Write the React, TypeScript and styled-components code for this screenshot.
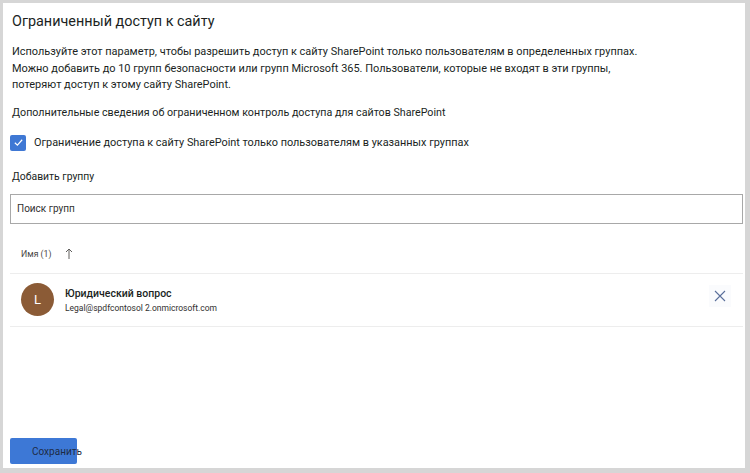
import React from 'react';
import styled, { createGlobalStyle } from 'styled-components';

const GlobalStyle = createGlobalStyle`
  html, body {
    margin: 0;
    padding: 0;
    background: #d6d6d6;
  }
  body {
    font-family: Roboto, "Noto Sans", Arial, sans-serif;
    color: #323130;
  }
`;

const Frame = styled.div`
  width: 750px;
  height: 473px;
  box-sizing: border-box;
  padding: 3px 5px 5px 3px;
  background: #d6d6d6;
`;

const Panel = styled.div`
  height: 100%;
  box-sizing: border-box;
  background: #ffffff;
  padding: 8px 2px 4px 7px;
  display: flex;
  flex-direction: column;
`;

const Title = styled.h1`
  margin: 0 0 0 2px;
  font-size: 14.4px;
  font-weight: 400;
  line-height: 22px;
  color: #201f1e;
`;

const Paragraph = styled.p`
  margin: 11px 0 0 2px;
  font-size: 10.95px;
  line-height: 16.5px;
  color: #201f1e;
`;

const Note = styled.p`
  margin: 11px 0 0 2px;
  font-size: 10.7px;
  line-height: 16px;
  color: #201f1e;
`;

const CheckRow = styled.label`
  display: flex;
  align-items: center;
  gap: 8px;
  margin-top: 14px;
  font-size: 10.9px;
  color: #201f1e;
`;

const CheckBox = styled.span`
  width: 16px;
  height: 16px;
  border-radius: 2px;
  background: #3f78d4;
  display: flex;
  align-items: center;
  justify-content: center;
  flex-shrink: 0;
`;

const FieldLabel = styled.div`
  margin: 18px 0 0 2px;
  font-size: 10.4px;
  line-height: 16px;
  color: #201f1e;
`;

const SearchBox = styled.div`
  margin-top: 9px;
  height: 30px;
  box-sizing: border-box;
  border: 1px solid #a8a8a8;
  display: flex;
  align-items: center;
  padding-left: 6px;
  font-size: 10px;
  color: #323130;
`;

const ListHeader = styled.div`
  display: flex;
  align-items: center;
  gap: 14px;
  height: 50px;
  box-sizing: border-box;
  padding: 12px 0 0 11px;
  font-size: 8.7px;
  color: #484644;
  border-bottom: 1px solid #ededed;
`;

const Row = styled.div`
  display: flex;
  align-items: center;
  height: 52px;
  padding-left: 11px;
  padding-right: 12px;
  border-bottom: 1px solid #ededed;
`;

const Avatar = styled.div<{ $color: string }>`
  width: 33px;
  height: 33px;
  border-radius: 50%;
  background: ${({ $color }) => $color};
  color: #ffffff;
  display: flex;
  align-items: center;
  justify-content: center;
  font-size: 13px;
  flex-shrink: 0;
`;

const Info = styled.div`
  margin-left: 11px;
  display: flex;
  flex-direction: column;
  gap: 3px;
  flex: 1;
`;

const Name = styled.div`
  font-size: 10.5px;
  font-weight: 500;
  color: #201f1e;
`;

const Email = styled.div`
  font-size: 8.5px;
  color: #323130;
`;

const RemoveButton = styled.button`
  width: 22px;
  height: 22px;
  margin-top: -8px;
  border: none;
  background: #fafbfd;
  padding: 0;
  display: flex;
  align-items: center;
  justify-content: center;
  cursor: pointer;
`;

const Spacer = styled.div`
  flex: 1;
`;

const SaveButton = styled.button`
  width: 67px;
  height: 26px;
  border: none;
  border-radius: 2px;
  background: #3d78d6;
  font-family: Roboto, Arial, sans-serif;
  font-size: 10px;
  color: #1d2b45;
  padding: 0 0 0 22px;
  text-align: left;
  white-space: nowrap;
  overflow: visible;
  cursor: pointer;
`;

const App: React.FC = () => {
  return (
    <>
      <GlobalStyle />
      <Frame>
        <Panel>
          <Title>Ограниченный доступ к сайту</Title>
          <Paragraph>
            Используйте этот параметр, чтобы разрешить доступ к сайту SharePoint только пользователям в определенных группах.
            <br />
            Можно добавить до 10 групп безопасности или групп Microsoft 365. Пользователи, которые не входят в эти группы,
            <br />
            потеряют доступ к этому сайту SharePoint.
          </Paragraph>
          <Note>Дополнительные сведения об ограниченном контроль доступа для сайтов SharePoint</Note>
          <CheckRow>
            <CheckBox>
              <svg width="11" height="11" viewBox="0 0 12 12">
                <path d="M2 6.3 L4.8 9 L10 3" fill="none" stroke="#ffffff" strokeWidth="1.3" />
              </svg>
            </CheckBox>
            Ограничение доступа к сайту SharePoint только пользователям в указанных группах
          </CheckRow>
          <FieldLabel>Добавить группу</FieldLabel>
          <SearchBox>Поиск групп</SearchBox>
          <ListHeader>
            <span>Имя (1)</span>
            <svg width="8" height="12" viewBox="0 0 8 12">
              <path d="M4 11 V1 M1 4 L4 1 L7 4" fill="none" stroke="#605e5c" strokeWidth="1" />
            </svg>
          </ListHeader>
          <Row>
            <Avatar $color="#8b5b36">L</Avatar>
            <Info>
              <Name>Юридический вопрос</Name>
              <Email>Legal@spdfcontosol 2.onmicrosoft.com</Email>
            </Info>
            <RemoveButton aria-label="Удалить">
              <svg width="12" height="12" viewBox="0 0 12 12">
                <path d="M1 1 L11 11 M11 1 L1 11" fill="none" stroke="#5a6f9a" strokeWidth="1.1" />
              </svg>
            </RemoveButton>
          </Row>
          <Spacer />
          <SaveButton>Сохранить</SaveButton>
        </Panel>
      </Frame>
    </>
  );
};

export default App;
